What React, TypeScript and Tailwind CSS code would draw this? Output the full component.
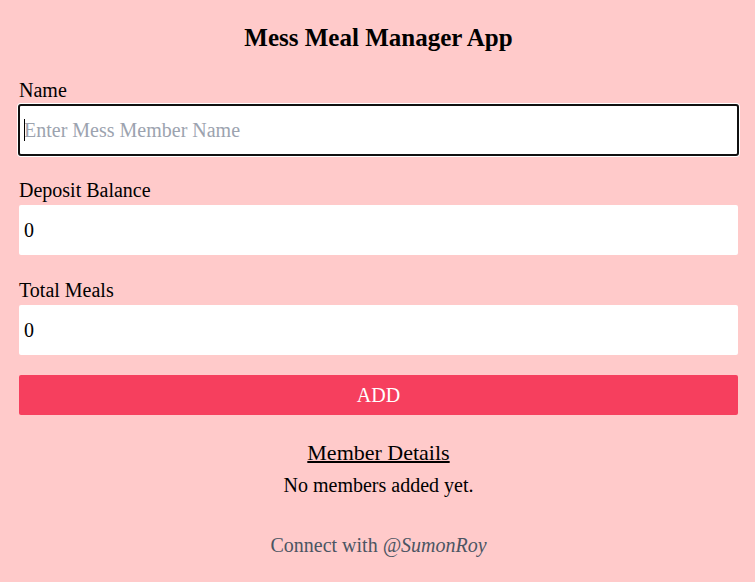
import { useState } from "react";
import type { FormEvent } from "react";

type Member = { name: string; deposit: number; meals: number };

const inputClass =
  "peer block h-[50px] w-full rounded-xs bg-white p-[5px] text-black placeholder:text-[#9ca3af] placeholder-shown:caret-transparent focus:ring-2 focus:ring-white focus:outline-2 focus:-outline-offset-1 focus:outline-[#101010]";

export default function App() {
  const [name, setName] = useState("");
  const [deposit, setDeposit] = useState("0");
  const [meals, setMeals] = useState("0");
  const [members, setMembers] = useState<Member[]>([]);

  const addMember = (event: FormEvent) => {
    event.preventDefault();
    if (!name.trim()) return;
    setMembers([...members, { name, deposit: Number(deposit), meals: Number(meals) }]);
    setName("");
    setDeposit("0");
    setMeals("0");
  };

  return (
    <div className="min-h-screen bg-[#ffcaca] py-5 pr-[17px] pl-[19px] font-['Liberation_Serif',serif] text-[20px] leading-[30px] text-black">
      <h1 className="mb-5 text-center text-[25px] leading-[35px] font-bold">Mess Meal Manager App</h1>

      <form onSubmit={addMember} className="flex flex-col gap-5">
        <div>
          <label htmlFor="name" className="block">Name</label>
          <div className="relative">
            <input
              id="name"
              type="text"
              autoFocus
              placeholder="Enter Mess Member Name"
              value={name}
              onChange={(event) => setName(event.target.value)}
              className={inputClass}
            />
            {/* Caret shown in front of the placeholder while the field is empty */}
            {name === "" && (
              <span
                aria-hidden="true"
                className="pointer-events-none invisible absolute inset-y-[14px] left-[5px] w-px bg-black peer-focus:visible"
              />
            )}
          </div>
        </div>
        <div>
          <label htmlFor="deposit" className="block">Deposit Balance</label>
          <input
            id="deposit"
            type="text"
            inputMode="numeric"
            value={deposit}
            onChange={(event) => setDeposit(event.target.value)}
            className={inputClass}
          />
        </div>
        <div>
          <label htmlFor="meals" className="block">Total Meals</label>
          <input
            id="meals"
            type="text"
            inputMode="numeric"
            value={meals}
            onChange={(event) => setMeals(event.target.value)}
            className={inputClass}
          />
        </div>
        <button type="submit" className="h-10 w-full rounded-xs bg-[#f63f5e] text-white">
          ADD
        </button>
      </form>

      <section className="mt-5 text-center">
        <h2 className="text-[22px] leading-[35px] underline decoration-2">Member Details</h2>
        {members.length === 0 ? (
          <p>No members added yet.</p>
        ) : (
          <ul>
            {members.map((member, index) => (
              <li key={index}>
                {member.name} – {member.deposit} – {member.meals}
              </li>
            ))}
          </ul>
        )}
      </section>

      <footer className="mt-[30px] text-center text-[#4b5563]">
        Connect with{" "}
        <a href="#sumonroy" className="italic">@SumonRoy</a>
      </footer>
    </div>
  );
}
